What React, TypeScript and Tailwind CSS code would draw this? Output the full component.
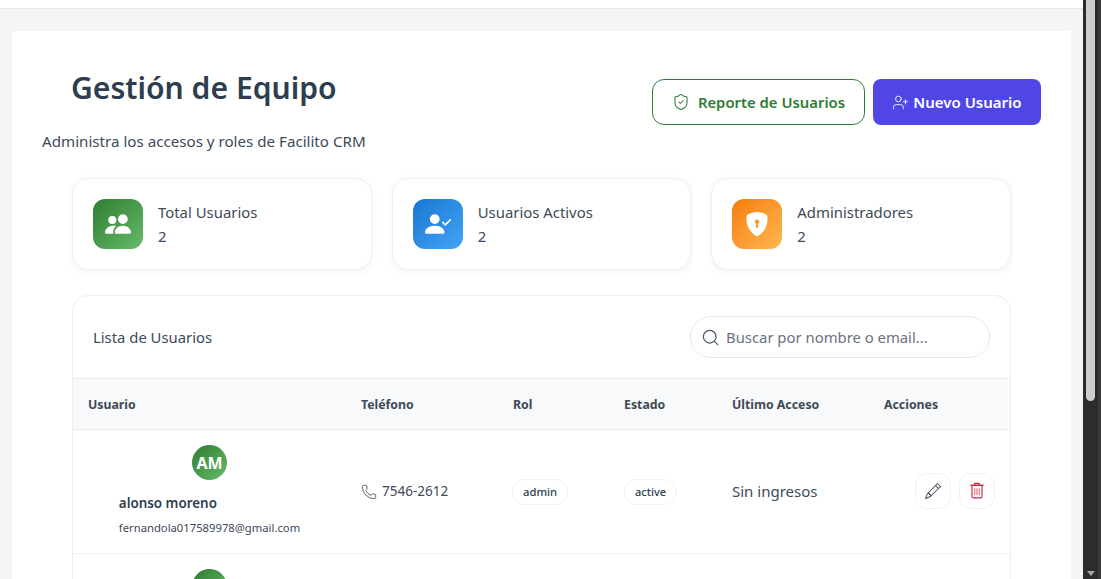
import { Phone, Search, ShieldCheck, UserPlus } from "lucide-react";
import { BsPencil, BsPeopleFill, BsPersonCheckFill, BsShieldLockFill } from "react-icons/bs";

const stats = [
  { label: "Total Usuarios", value: 2, bg: "bg-gradient-to-br from-[#2e7d32] to-[#66bb6a]", icon: <BsPeopleFill size={26} /> },
  { label: "Usuarios Activos", value: 2, bg: "bg-gradient-to-br from-[#1976d2] to-[#42a5f5]", icon: <BsPersonCheckFill size={26} /> },
  { label: "Administradores", value: 2, bg: "bg-gradient-to-br from-[#f57c00] to-[#ffb74d]", icon: <BsShieldLockFill size={24} /> },
];

function TrashIcon() {
  return (
    <svg width="16" height="17" viewBox="0 0 16 17" fill="none" stroke="currentColor" strokeWidth="1.2">
      <path d="M1.5 3.2h13" strokeWidth="1.6" />
      <path d="M5.8 3V1.4h4.4V3" />
      <path d="M3 3.5v11.2c0 .7.5 1.2 1.2 1.2h7.6c.7 0 1.2-.5 1.2-1.2V3.5" />
      <path d="M5.7 6.2v7M8 6.2v7M10.3 6.2v7" strokeOpacity="0.65" />
    </svg>
  );
}

function Scrollbar() {
  return (
    <div className="shrink-0 h-full flex">
      <div className="w-[15px] h-full bg-[#2c2c2c] flex flex-col items-center">
        <div className="w-[9px] h-[401px] bg-[#cdcdcd] rounded-b-full" />
        <div className="mt-auto mb-[3px] w-0 h-0 border-x-[4px] border-x-transparent border-t-[5px] border-t-[#a8a8a8]" />
      </div>
      <div className="w-[3px] h-full bg-[#383838]" />
    </div>
  );
}

export default function App() {
  return (
    <div className="h-screen flex overflow-hidden bg-white font-['Noto_Sans',sans-serif] text-[#2c3e50]">
      <div className="flex-1 min-w-0 h-full overflow-hidden bg-[#f4f5f7]">
        <div className="h-[9px] bg-white border-b border-[#e5e7eb]" />
        <main className="mx-3 mt-[22px] bg-white h-[600px]">
          <div className="flex justify-between px-[30px] pt-[30px] h-[147px]">
            <div>
              <h1 className="ml-[29px] text-[30.1px] leading-[54px] font-semibold">Gestión de Equipo</h1>
              <p className="mt-[14px] text-[15.15px] leading-[24px] text-[#3d4a58]">Administra los accesos y roles de Facilito CRM</p>
            </div>
            <div className="flex gap-2 mt-[18px] h-[46px]">
              <button className="w-[213px] flex items-center justify-center gap-2 rounded-xl border border-[#2e7d32] text-[#2e7d32] text-[14.85px] font-semibold">
                <ShieldCheck size={18} strokeWidth={1.4} />
                Reporte de Usuarios
              </button>
              <button className="w-[168px] flex items-center justify-center gap-1 rounded-lg bg-[#4f46e5] text-white text-[15px] font-semibold">
                <UserPlus size={17} strokeWidth={1.25} />
                Nuevo Usuario
              </button>
            </div>
          </div>

          <div className="mx-[60px]">
            <div className="grid grid-cols-3 gap-5">
              {stats.map((s) => (
                <div key={s.label} className="h-[92px] flex items-center gap-[15px] px-5 rounded-2xl border border-[#eceef1] bg-white shadow-[0_2px_8px_rgba(0,0,0,0.05)]">
                  <div className={`w-[50px] h-[50px] rounded-xl flex items-center justify-center text-white ${s.bg}`}>{s.icon}</div>
                  <div className="text-[14.9px] leading-[24px] text-[#3d4a58]">
                    <p>{s.label}</p>
                    <p>{s.value}</p>
                  </div>
                </div>
              ))}
            </div>

            <div className="mt-[25px] rounded-2xl border border-[#eceef1] bg-white overflow-hidden">
              <div className="h-[82px] flex items-center justify-between px-5">
                <h2 className="text-[14.85px] text-[#3d4a58]">Lista de Usuarios</h2>
                <div className="w-[300px] h-[42px] flex items-center gap-[6px] px-[10px] rounded-full border border-[#e5e7eb] text-[14.85px] text-[#6b7280]">
                  <Search size={19} strokeWidth={1.5} className="text-[#4b5563]" />
                  Buscar por nombre o email...
                </div>
              </div>
              <table className="w-full table-fixed">
                <colgroup>
                  <col className="w-[273px]" />
                  <col className="w-[152px]" />
                  <col className="w-[111px]" />
                  <col className="w-[108px]" />
                  <col className="w-[152px]" />
                  <col />
                </colgroup>
                <thead>
                  <tr className="h-[51px] bg-[#f8f9fa] text-[12.3px] font-bold text-[#3d4a58] border-y border-[#e9ecef] text-left">
                    <th className="px-[15px] pt-[2px]">Usuario</th>
                    <th className="px-[15px] pt-[2px]">Teléfono</th>
                    <th className="px-[15px] pt-[2px]">Rol</th>
                    <th className="px-[15px] pt-[2px]">Estado</th>
                    <th className="px-[15px] pt-[2px]">Último Acceso</th>
                    <th className="px-[15px] pt-[2px]">Acciones</th>
                  </tr>
                </thead>
                <tbody>
                  <tr className="h-[124px] border-b border-[#eef0f2]">
                    <td className="px-[15px] pt-[15px] align-top">
                      <div className="flex flex-col items-center">
                        <div className="w-[35px] h-[35px] rounded-full bg-gradient-to-br from-[#2e7d32] to-[#66bb6a] text-white font-bold text-[16px] flex items-center justify-center">AM</div>
                        <div className="mt-[13px]">
                          <p className="text-[13.4px] leading-[20px] font-semibold">alonso moreno</p>
                          <p className="mt-[6px] text-[11.25px] leading-[18px] text-[#3d4a58]">fernandola017589978@gmail.com</p>
                        </div>
                      </div>
                    </td>
                    <td className="px-[15px]">
                      <div className="flex items-center gap-[5px] text-[13.5px] text-[#3d4a58]">
                        <Phone size={16} strokeWidth={1.25} />
                        7546-2612
                      </div>
                    </td>
                    <td className="px-[15px]">
                      <span className="inline-block -ml-px px-[10px] py-[3px] rounded-full border border-[#f0f1f3] text-[11.25px] leading-[18px] font-medium">admin</span>
                    </td>
                    <td className="px-[15px]">
                      <span className="inline-block px-[10px] py-[3px] rounded-full border border-[#f0f1f3] text-[11px] leading-[18px] font-medium">active</span>
                    </td>
                    <td className="px-[15px] pb-[1px] text-[15px] text-[#3d4a58]">Sin ingresos</td>
                    <td className="px-[15px]">
                      <div className="flex justify-end gap-2 mb-[2px]">
                        <button className="w-[36px] h-[36px] rounded-xl border border-[#f0f1f3] flex items-center justify-center text-[#4b5563]"><BsPencil size={16} /></button>
                        <button className="w-[36px] h-[36px] rounded-xl border border-[#f0f1f3] flex items-center justify-center text-[#c62f45]"><TrashIcon /></button>
                      </div>
                    </td>
                  </tr>
                  <tr className="h-[124px]">
                    <td className="px-[15px] align-top pt-[15px]">
                      <div className="flex justify-center">
                        <div className="w-[35px] h-[35px] rounded-full bg-gradient-to-br from-[#2e7d32] to-[#66bb6a]" />
                      </div>
                    </td>
                  </tr>
                </tbody>
              </table>
            </div>
          </div>
        </main>
      </div>
      <Scrollbar />
    </div>
  );
}
